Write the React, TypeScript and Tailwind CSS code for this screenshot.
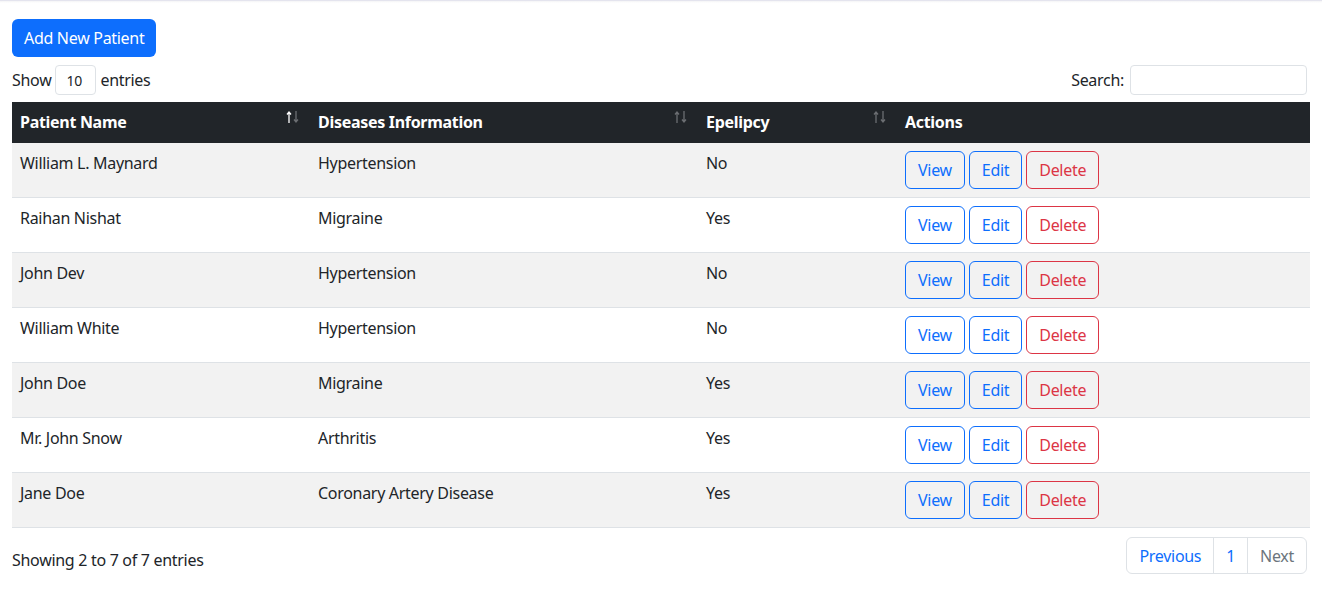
import React from 'react';

const patients = [
  { name: 'William L. Maynard', disease: 'Hypertension', epilepsy: 'No' },
  { name: 'Raihan Nishat', disease: 'Migraine', epilepsy: 'Yes' },
  { name: 'John Dev', disease: 'Hypertension', epilepsy: 'No' },
  { name: 'William White', disease: 'Hypertension', epilepsy: 'No' },
  { name: 'John Doe', disease: 'Migraine', epilepsy: 'Yes' },
  { name: 'Mr. John Snow', disease: 'Arthritis', epilepsy: 'Yes' },
  { name: 'Jane Doe', disease: 'Coronary Artery Disease', epilepsy: 'Yes' },
];

function SortIcon({ active }: { active?: boolean }) {
  const up = active ? '#ffffff' : '#6b6e72';
  return (
    <svg className="absolute right-[10px] top-[8px]" width="14" height="14" viewBox="0 0 14 14" fill="none">
      <path d="M3 13V2M1 4.5L3 2l2 2.5" stroke={up} strokeWidth="1.3" />
      <path d="M10 1v11M8 9.5L10 12l2-2.5" stroke="#6b6e72" strokeWidth="1.3" />
    </svg>
  );
}

export default function App() {
  return (
    <div
      className="min-h-screen bg-white text-[16px] tracking-[-0.3px] text-[#212529]"
      style={{ fontFamily: '"Noto Sans", "Open Sans", sans-serif' }}
    >
      <div className="h-[3px] border-t border-[#e4e4ee] bg-gradient-to-b from-[#f4f4f6] to-white" />
      <div className="px-3 pt-4">
        <button className="h-[38px] rounded-md bg-[#0d6efd] px-3 leading-6 text-white">
          Add New Patient
        </button>

        <div className="mt-2 flex items-center justify-between">
          <div className="flex items-center">
            <span>Show</span>
            <div className="mx-1 flex h-[30px] w-[41px] items-center rounded border border-[#dee2e6] pl-[10px] text-[14px]">
              10
            </div>
            <span>entries</span>
          </div>
          <div className="mr-[3px] flex items-center">
            <span className="mr-[6px]">Search:</span>
            <div className="h-[30px] w-[177px] rounded border border-[#dee2e6]" />
          </div>
        </div>

        <table className="mt-[7px] w-full border-collapse">
          <thead>
            <tr className="h-[41px] bg-[#212529] text-left font-bold text-white">
              <th className="relative w-[298px] px-2 pb-[2px]">
                Patient Name
                <SortIcon active />
              </th>
              <th className="relative w-[388px] px-2 pb-[2px]">
                Diseases Information
                <SortIcon />
              </th>
              <th className="relative w-[199px] px-2 pb-[2px]">
                Epelipcy
                <SortIcon />
              </th>
              <th className="px-2 pb-[2px]">Actions</th>
            </tr>
          </thead>
          <tbody>
            {patients.map((p, i) => (
              <tr
                key={p.name}
                className={`border-b border-[#dee2e6] align-top ${i % 2 === 0 ? 'bg-[#f2f2f2]' : 'bg-white'}`}
              >
                <td className="p-2 leading-6">{p.name}</td>
                <td className="p-2 leading-6">{p.disease}</td>
                <td className="p-2 leading-6">{p.epilepsy}</td>
                <td className="p-2">
                  <div className="flex gap-1">
                    <button className="h-[38px] rounded-md border border-[#0d6efd] px-3 text-[#0d6efd]">
                      View
                    </button>
                    <button className="h-[38px] rounded-md border border-[#0d6efd] px-3 text-[#0d6efd]">
                      Edit
                    </button>
                    <button className="h-[38px] rounded-md border border-[#dc3545] px-3 text-[#dc3545]">
                      Delete
                    </button>
                  </div>
                </td>
              </tr>
            ))}
          </tbody>
        </table>

        <div className="mt-[9px] flex items-center justify-between">
          <span className="pt-[8px]">Showing 2 to 7 of 7 entries</span>
          <div className="mr-[3px] flex h-[37px] rounded-md border border-[#dee2e6]">
            <span className="flex items-center border-r border-[#dee2e6] px-3 text-[#0d6efd]">Previous</span>
            <span className="flex items-center border-r border-[#dee2e6] px-3 text-[#0d6efd]">1</span>
            <span className="flex items-center px-3 text-[#6c757d]">Next</span>
          </div>
        </div>
      </div>
    </div>
  );
}
